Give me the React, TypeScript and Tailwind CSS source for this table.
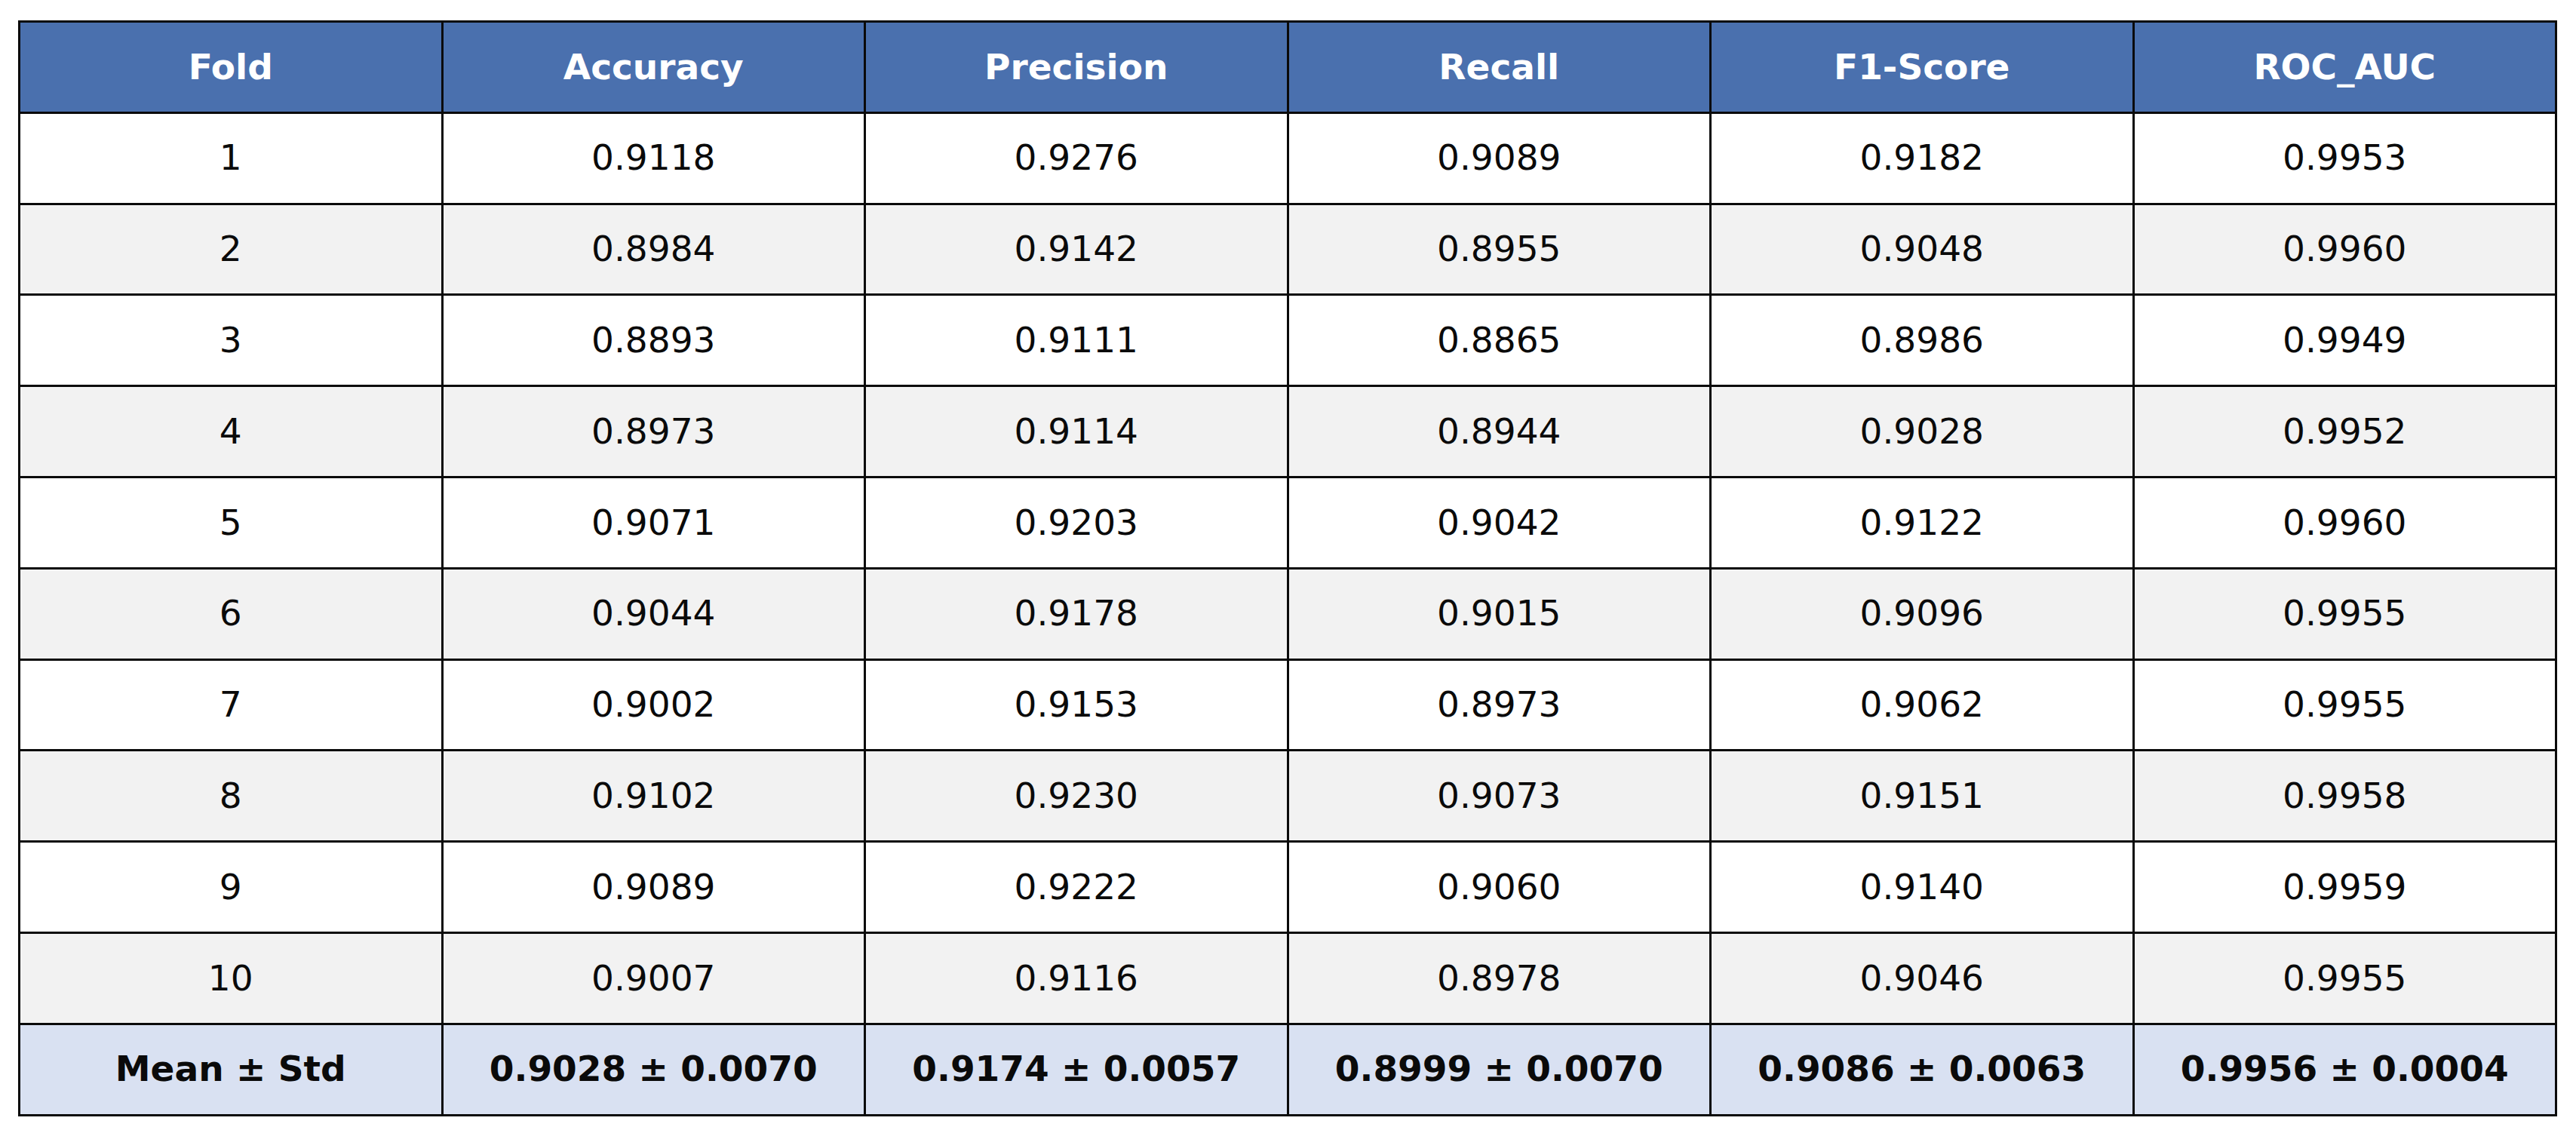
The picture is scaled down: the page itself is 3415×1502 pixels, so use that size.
import React from "react";

const headers = ["Fold", "Accuracy", "Precision", "Recall", "F1-Score", "ROC_AUC"];
const rows: string[][] = [
  ["1", "0.9118", "0.9276", "0.9089", "0.9182", "0.9953"],
  ["2", "0.8984", "0.9142", "0.8955", "0.9048", "0.9960"],
  ["3", "0.8893", "0.9111", "0.8865", "0.8986", "0.9949"],
  ["4", "0.8973", "0.9114", "0.8944", "0.9028", "0.9952"],
  ["5", "0.9071", "0.9203", "0.9042", "0.9122", "0.9960"],
  ["6", "0.9044", "0.9178", "0.9015", "0.9096", "0.9955"],
  ["7", "0.9002", "0.9153", "0.8973", "0.9062", "0.9955"],
  ["8", "0.9102", "0.9230", "0.9073", "0.9151", "0.9958"],
  ["9", "0.9089", "0.9222", "0.9060", "0.9140", "0.9959"],
  ["10", "0.9007", "0.9116", "0.8978", "0.9046", "0.9955"],
];
const mean = ["Mean ± Std", "0.9028 ± 0.0070", "0.9174 ± 0.0057", "0.8999 ± 0.0070", "0.9086 ± 0.0063", "0.9956 ± 0.0004"];

export default function App() {
  return (
    <div className="w-[3415px] h-[1502px] bg-white pt-[27px] pl-[24px]" style={{ fontFamily: '"DejaVu Sans", "Liberation Sans", sans-serif' }}>
      <table className="table-fixed border-collapse w-[3366px] text-[47px] text-[#0a0a0a]">
        <thead>
          <tr className="h-[120.8px] bg-[#4a70ae]">
            {headers.map((h) => (
              <th key={h} className="border-[3px] border-[#0a0a0a] text-white font-bold text-center align-middle p-0">
                {h}
              </th>
            ))}
          </tr>
        </thead>
        <tbody>
          {rows.map((r, i) => (
            <tr key={i} className={i % 2 === 0 ? "h-[120.8px] bg-white" : "h-[120.8px] bg-[#f2f2f2]"}>
              {r.map((c, j) => (
                <td key={j} className="border-[3px] border-[#0a0a0a] text-center align-middle p-0">
                  {c}
                </td>
              ))}
            </tr>
          ))}
          <tr className="h-[120.8px] bg-[#d9e1f2]">
            {mean.map((c, j) => (
              <td key={j} className="border-[3px] border-[#0a0a0a] text-center align-middle font-bold p-0">
                {c}
              </td>
            ))}
          </tr>
        </tbody>
      </table>
    </div>
  );
}
